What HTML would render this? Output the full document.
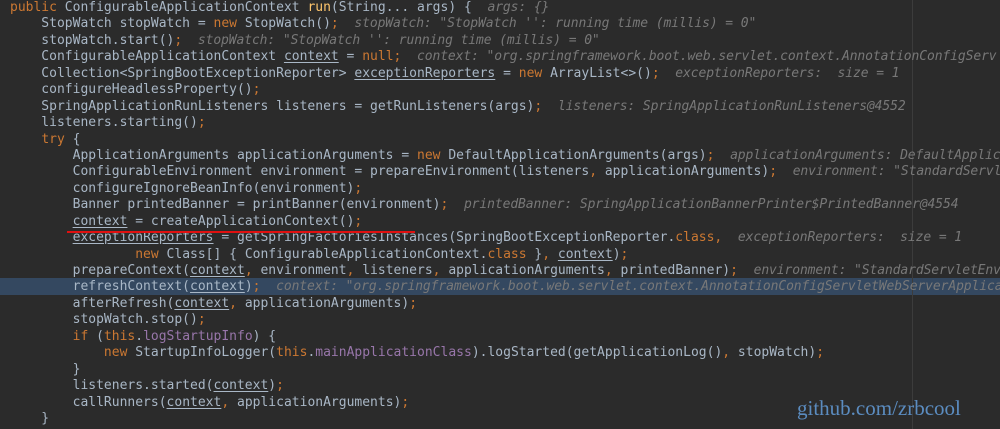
<!DOCTYPE html>
<html><head><style>
html,body{margin:0;padding:0;background:#2b2b2b;width:1000px;height:429px;overflow:hidden;position:relative}
pre{position:absolute;left:10px;top:0px;margin:0;font-family:"DejaVu Sans Mono","Liberation Mono",monospace;font-size:13px;line-height:16.44px;color:#a9b7c6;white-space:pre;z-index:2}
.k{color:#cc7832}.m{color:#ffc66d}.f{color:#9876aa}
.h{color:#787878;font-style:italic;letter-spacing:-0.1px}
.u{text-decoration:underline;text-underline-offset:2px}
.hl{position:absolute;left:0;top:278px;width:1000px;height:17px;background:#344860;z-index:1}
.vl{position:absolute;left:912px;top:0;width:1px;height:429px;background:#3c3c3c;z-index:1}
.red{position:absolute;left:67px;top:231px;width:348px;height:2px;background:#e01010;z-index:3}
.wm{position:absolute;left:797px;top:396px;font-family:"Liberation Serif",serif;font-size:21px;color:#5b8cc0;z-index:3}
</style></head><body>
<div class="hl"></div><div class="vl"></div><div class="red"></div>
<pre><span class="k">public </span>ConfigurableApplicationContext <span class="m">run</span>(String... args) {  <span class="h">args: {}</span>
    StopWatch stopWatch = <span class="k">new </span>StopWatch()<span class="k">;</span>  <span class="h">stopWatch: "StopWatch '': running time (millis) = 0"</span>
    stopWatch.start()<span class="k">;</span>  <span class="h">stopWatch: "StopWatch '': running time (millis) = 0"</span>
    ConfigurableApplicationContext <span class="u">context</span> = <span class="k">null;</span>  <span class="h">context: "org.springframework.boot.web.servlet.context.AnnotationConfigServ</span>
    Collection&lt;SpringBootExceptionReporter&gt; <span class="u">exceptionReporters</span> = <span class="k">new </span>ArrayList&lt;&gt;()<span class="k">;</span>  <span class="h">exceptionReporters:  size = 1</span>
    configureHeadlessProperty()<span class="k">;</span>
    SpringApplicationRunListeners listeners = getRunListeners(args)<span class="k">;</span>  <span class="h">listeners: SpringApplicationRunListeners@4552</span>
    listeners.starting()<span class="k">;</span>
    <span class="k">try </span>{
        ApplicationArguments applicationArguments = <span class="k">new </span>DefaultApplicationArguments(args)<span class="k">;</span>  <span class="h">applicationArguments: DefaultApplica</span>
        ConfigurableEnvironment environment = prepareEnvironment(listeners<span class="k">, </span>applicationArguments)<span class="k">;</span>  <span class="h">environment: "StandardServle</span>
        configureIgnoreBeanInfo(environment)<span class="k">;</span>
        Banner printedBanner = printBanner(environment)<span class="k">;</span>  <span class="h">printedBanner: SpringApplicationBannerPrinter$PrintedBanner@4554</span>
        <span class="u">context</span> = createApplicationContext()<span class="k">;</span>
        <span class="u">exceptionReporters</span> = getSpringFactoriesInstances(SpringBootExceptionReporter.<span class="k">class,</span>  <span class="h">exceptionReporters:  size = 1</span>
                <span class="k">new </span>Class[] { ConfigurableApplicationContext.<span class="k">class </span>}<span class="k">, </span><span class="u">context</span>)<span class="k">;</span>
        prepareContext(<span class="u">context</span><span class="k">, </span>environment<span class="k">, </span>listeners<span class="k">, </span>applicationArguments<span class="k">, </span>printedBanner)<span class="k">;</span>  <span class="h">environment: "StandardServletEnvi</span>
        refreshContext(<span class="u">context</span>)<span class="k">;</span>  <span class="h">context: "org.springframework.boot.web.servlet.context.AnnotationConfigServletWebServerApplica</span>
        afterRefresh(<span class="u">context</span><span class="k">, </span>applicationArguments)<span class="k">;</span>
        stopWatch.stop()<span class="k">;</span>
        <span class="k">if </span>(<span class="k">this</span>.<span class="f">logStartupInfo</span>) {
            <span class="k">new </span>StartupInfoLogger(<span class="k">this</span>.<span class="f">mainApplicationClass</span>).logStarted(getApplicationLog()<span class="k">, </span>stopWatch)<span class="k">;</span>
        }
        listeners.started(<span class="u">context</span>)<span class="k">;</span>
        callRunners(<span class="u">context</span><span class="k">, </span>applicationArguments)<span class="k">;</span>
    }</pre>
<div class="wm">github.com/zrbcool</div>
</body></html>
